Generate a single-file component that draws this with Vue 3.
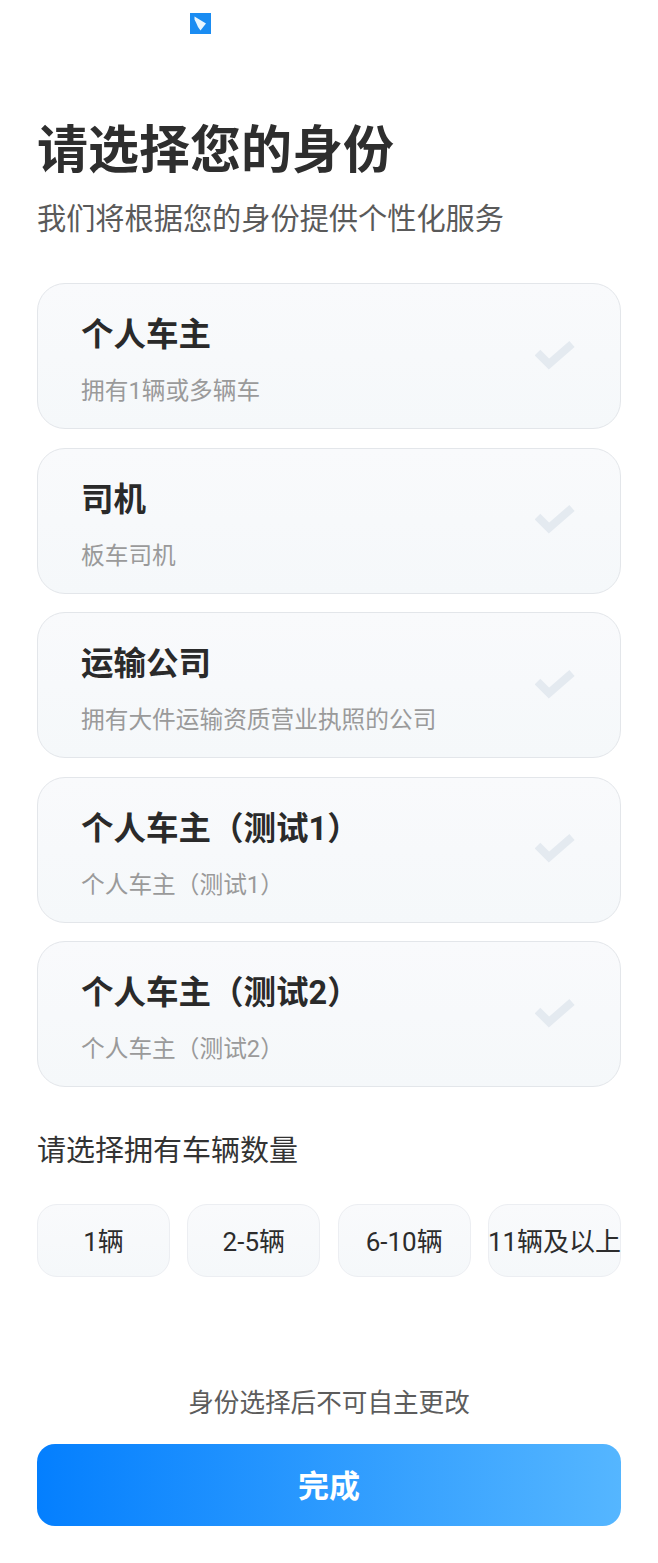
<template>
  <div class="page">
    <div class="logo-row">
      <svg class="logo" width="21" height="21" viewBox="0 0 21 21">
        <rect width="21" height="21" fill="#1a8cf2" />
        <path d="M4.5 3.5 L16 10.5 L14 13 L10.5 17.5 L8 14 L6 9.5 L4.5 6.5 Z" fill="#e8f6ff" />
      </svg>
    </div>

    <h1 class="title">请选择您的身份</h1>
    <p class="subtitle">我们将根据您的身份提供个性化服务</p>

    <div class="role-list">
      <div v-for="role in roles" :key="role.name" class="role-card">
        <div class="role-text">
          <div class="role-name">{{ role.name }}</div>
          <div class="role-desc">{{ role.desc }}</div>
        </div>
        <svg class="check" width="40" height="32" viewBox="0 0 40 32">
          <path d="M2.5 14.5 L14 26 L37 6" fill="none" stroke="#e4eaf0" stroke-width="8" />
        </svg>
      </div>
    </div>

    <div class="count-label">请选择拥有车辆数量</div>
    <div class="count-grid">
      <div v-for="item in counts" :key="item" class="count-item">{{ item }}</div>
    </div>

    <div class="notice">身份选择后不可自主更改</div>
    <button class="done-btn" type="button">完成</button>
  </div>
</template>

<script setup>
const roles = [
  { name: "个人车主", desc: "拥有1辆或多辆车" },
  { name: "司机", desc: "板车司机" },
  { name: "运输公司", desc: "拥有大件运输资质营业执照的公司" },
  { name: "个人车主（测试1）", desc: "个人车主（测试1）" },
  { name: "个人车主（测试2）", desc: "个人车主（测试2）" }
];

const counts = ["1辆", "2-5辆", "6-10辆", "11辆及以上"];
</script>

<style>
html,
body {
  margin: 0;
  background: #fff;
}
</style>

<style scoped>
.page {
  box-sizing: border-box;
  width: 658px;
  height: 1563px;
  padding: 13px 37px 0;
  background: #fff;
  font-family: Roboto, "Noto Sans CJK SC", sans-serif;
  color: #2b2b2b;
}

.logo-row {
  height: 21px;
  padding-left: 153px;
}

.logo {
  display: block;
}

.title {
  margin: 84px 0 0;
  font-size: 51px;
  line-height: 66px;
  font-weight: 700;
  color: #2e2e2e;
}

.subtitle {
  margin: 14px 0 0;
  font-size: 29.2px;
  line-height: 42px;
  color: #5a5a5a;
}

.role-list {
  display: flex;
  flex-direction: column;
  gap: 18.5px;
  margin-top: 43px;
}

.role-card {
  box-sizing: border-box;
  display: flex;
  align-items: center;
  justify-content: space-between;
  height: 146px;
  padding: 0 45px 0 43px;
  border: 1px solid #e3e6ea;
  border-radius: 28px;
  background: linear-gradient(180deg, #f9fafc, #f5f8fa);
}

.role-text {
  padding-top: 8px;
}

.role-name {
  font-size: 32.5px;
  line-height: 44px;
  font-weight: 700;
  color: #2a2a2a;
}

.role-desc {
  margin-top: 18px;
  font-size: 23.7px;
  line-height: 32px;
  color: #9a9a9a;
}

.check {
  display: block;
  margin-top: -5px;
}

.count-label {
  margin-top: 43px;
  font-size: 29px;
  line-height: 42px;
  color: #333;
}

.count-grid {
  display: grid;
  grid-template-columns: repeat(4, 133px);
  justify-content: space-between;
  margin-top: 32px;
}

.count-item {
  box-sizing: border-box;
  display: flex;
  align-items: center;
  justify-content: center;
  height: 73px;
  padding-bottom: 2px;
  border: 1px solid #eceef2;
  border-radius: 20px;
  background: linear-gradient(180deg, #f9fafc, #f5f8fa);
  font-size: 26px;
  white-space: nowrap;
  color: #2c2c2c;
}

.notice {
  margin-top: 107px;
  font-size: 25.6px;
  line-height: 38px;
  text-align: center;
  color: #5c5c5c;
}

.done-btn {
  display: block;
  width: 100%;
  height: 82px;
  margin-top: 22px;
  padding: 0 0 4px;
  border: none;
  border-radius: 18px;
  background: linear-gradient(90deg, #047ffe, #55b6ff);
  color: #fff;
  font-family: inherit;
  font-size: 31px;
  font-weight: 700;
}
</style>
